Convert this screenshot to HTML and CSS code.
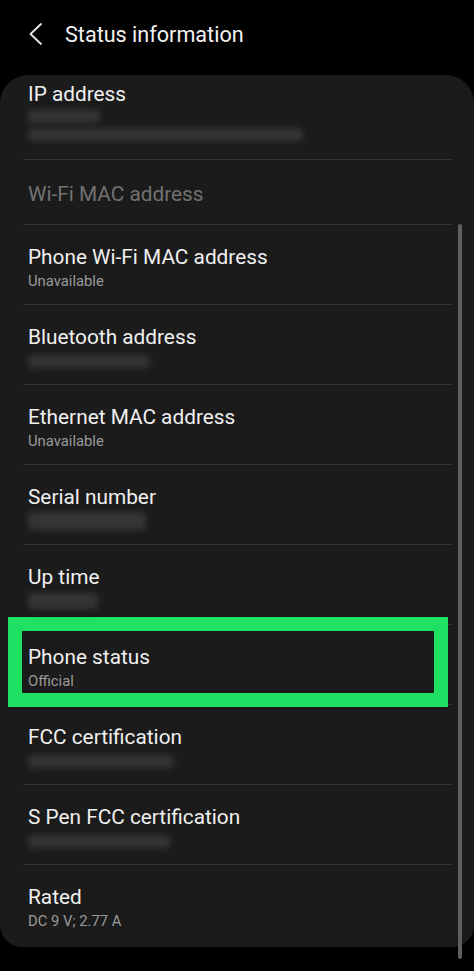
FILE: index.html
```html
<!DOCTYPE html>
<html lang="en">
<head>
<meta charset="utf-8">
<title>Status information</title>
<link rel="stylesheet" href="styles.css">
</head>
<body>
<header class="topbar">
  <svg class="back" width="16" height="24" viewBox="0 0 16 24" aria-hidden="true">
    <polyline points="13,2 2.5,12 13,22" fill="none" stroke="#e8e8e8" stroke-width="1.8" stroke-linecap="round" stroke-linejoin="round"/>
  </svg>
  <h1 class="title">Status information</h1>
</header>
<main class="card">
  <div class="row row-first">
    <div class="label">IP address</div>
    <div class="sub"><span class="blur w-ip1"></span></div>
    <div class="sub"><span class="blur w-ip2"></span></div>
  </div>
  <div class="row row-single">
    <div class="label dim">Wi-Fi MAC address</div>
  </div>
  <div class="row">
    <div class="label">Phone Wi-Fi MAC address</div>
    <div class="sub">Unavailable</div>
  </div>
  <div class="row">
    <div class="label">Bluetooth address</div>
    <div class="sub"><span class="blur w-bt"></span></div>
  </div>
  <div class="row">
    <div class="label">Ethernet MAC address</div>
    <div class="sub">Unavailable</div>
  </div>
  <div class="row">
    <div class="label">Serial number</div>
    <div class="sub"><span class="blur w-sn"></span></div>
  </div>
  <div class="row">
    <div class="label">Up time</div>
    <div class="sub"><span class="blur w-up"></span></div>
  </div>
  <div class="row">
    <div class="label">Phone status</div>
    <div class="sub">Official</div>
  </div>
  <div class="row">
    <div class="label">FCC certification</div>
    <div class="sub"><span class="blur w-fcc"></span></div>
  </div>
  <div class="row">
    <div class="label">S Pen FCC certification</div>
    <div class="sub"><span class="blur w-spen"></span></div>
  </div>
  <div class="row row-last">
    <div class="label">Rated</div>
    <div class="sub">DC 9 V; 2.77 A</div>
  </div>
  <div class="highlight"></div>
</main>
<div class="scrollbar"></div>
</body>
</html>
```
FILE: styles.css
```css
* { box-sizing: border-box; }
html, body { margin: 0; padding: 0; }
body {
  background: #000;
  width: 474px;
  height: 971px;
  overflow: hidden;
  font-family: Roboto, "Noto Sans", "Liberation Sans", sans-serif;
  color: #f0f0f0;
  position: relative;
}
.topbar {
  height: 75px;
  display: flex;
  align-items: flex-start;
  padding: 20px 0 0 28px;
}
.back { margin-top: 2px; flex: none; }
.title {
  margin: 0 0 0 21px;
  font-size: 21.6px;
  line-height: 30px;
  font-weight: 400;
  color: #f2f2f2;
}
.card {
  position: relative;
  background: #1b1b1b;
  border-radius: 28px 28px 22px 22px;
  height: 872px;
}
.row {
  margin: 0 22px 0 23px;
  padding: 19px 0 12px 5px;
  border-bottom: 1px solid #343434;
  height: 80px;
}
.row-first { padding-top: 6px; height: 85px; }
.row-single { padding-top: 21px; height: 65px; }
.row-last { border-bottom: none; height: 79px; }
.label {
  font-size: 20.8px;
  line-height: 26px;
  color: #f0f0f0;
}
.label.dim { color: #727272; }
.sub {
  font-size: 14.8px;
  line-height: 22px;
  color: #9a9a9a;
  height: 22px;
  display: flex;
  align-items: center;
}
.blur {
  display: block;
  height: 13px;
  background: #353535;
  border-radius: 4px;
  filter: blur(3px);
}
.row-first .sub { height: 18px; }
.w-ip1 { width: 72px; }
.w-ip2 { width: 275px; }
.w-bt { width: 122px; }
.w-sn { width: 118px; height: 18px; }
.w-up { width: 70px; height: 16px; }
.w-fcc { width: 146px; }
.w-spen { width: 142px; }
.highlight {
  position: absolute;
  left: 8px;
  top: 542px;
  width: 440px;
  height: 90px;
  border: 14px solid #1fe062;
}
.scrollbar {
  position: absolute;
  left: 458px;
  top: 224px;
  width: 4px;
  height: 735px;
  background: #5e5e5e;
  border-radius: 2px;
}
```
